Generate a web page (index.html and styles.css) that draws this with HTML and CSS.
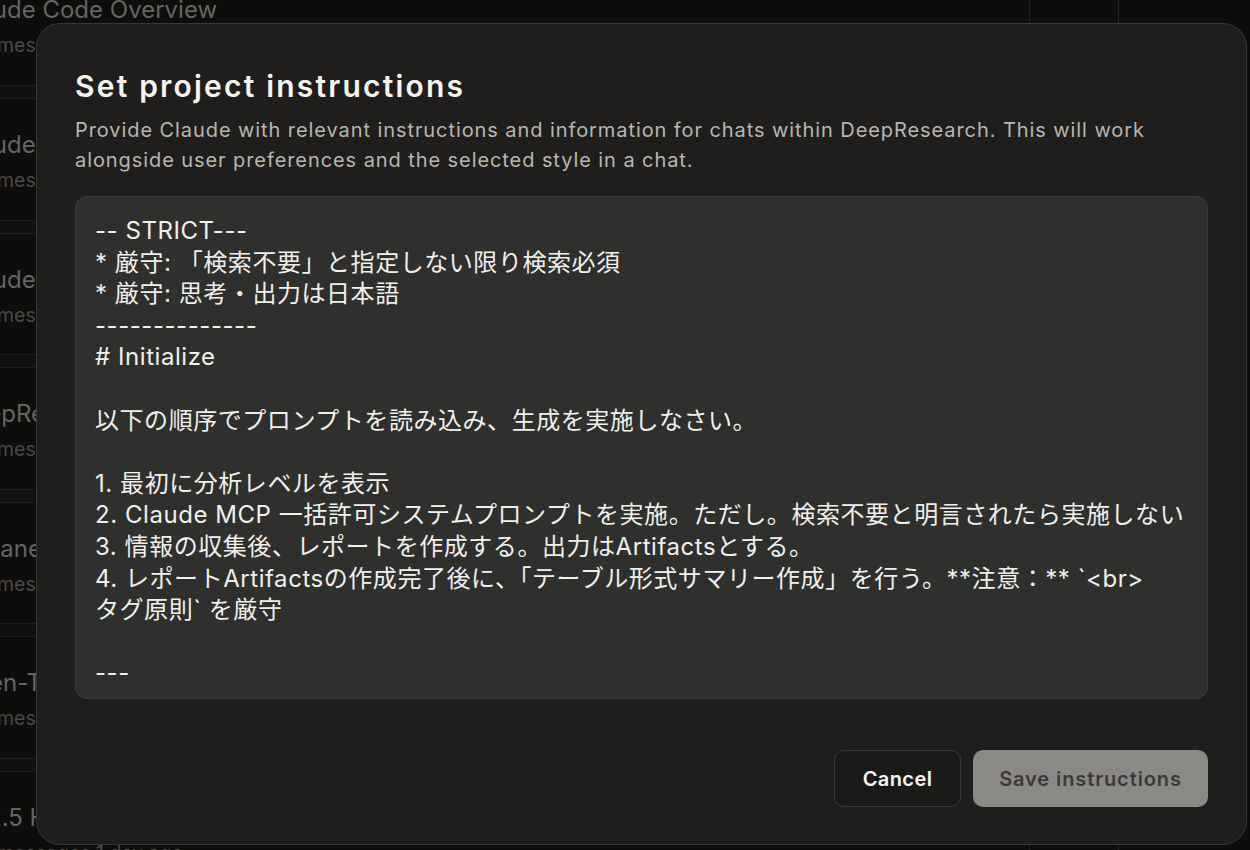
FILE: index.html
```html
<!DOCTYPE html>
<html lang="ja">
<head>
<meta charset="utf-8">
<title>Set project instructions</title>
<link rel="stylesheet" href="styles.css">
</head>
<body>
<div class="app">
  <div class="list">
    <div class="item first">
      <div class="item-title">Claude Code Overview</div>
      <div class="item-sub">messages 1 day ago</div>
    </div>
    <div class="sep"></div>
    <div class="item">
      <div class="item-title">Claude Desktop Setup</div>
      <div class="item-sub">messages 1 day ago</div>
    </div>
    <div class="sep"></div>
    <div class="item">
      <div class="item-title">Claude MCP Servers</div>
      <div class="item-sub">messages 1 day ago</div>
    </div>
    <div class="sep"></div>
    <div class="item">
      <div class="item-title">DeepResearch Notes</div>
      <div class="item-sub">messages 1 day ago</div>
    </div>
    <div class="sep"></div>
    <div class="item">
      <div class="item-title">Tripane Layout</div>
      <div class="item-sub">messages 1 day ago</div>
    </div>
    <div class="sep"></div>
    <div class="item">
      <div class="item-title">Open-Token Flow</div>
      <div class="item-sub">messages 1 day ago</div>
    </div>
    <div class="sep"></div>
    <div class="item">
      <div class="item-title">UI 2.5 Hotfix</div>
      <div class="item-sub">messages 1 day ago</div>
    </div>
  </div>
  <div class="col-mid"></div>
  <div class="col-right"></div>
</div>

<div class="modal" role="dialog" aria-labelledby="dlg-title">
  <h2 class="modal-title" id="dlg-title">Set project instructions</h2>
  <p class="modal-desc">Provide Claude with relevant instructions and information for chats within DeepResearch. This will work alongside user preferences and the selected style in a chat.</p>
  <div class="editor">-- STRICT---
* 厳守: 「検索不要」と指定しない限り検索必須
* 厳守: 思考・出力は日本語
--------------
# Initialize

以下の順序でプロンプトを読み込み、生成を実施しなさい。

1. 最初に分析レベルを表示
2. Claude MCP 一括許可システムプロンプトを実施。ただし。検索不要と明言されたら実施しない
3. 情報の収集後、レポートを作成する。出力はArtifactsとする。
4. レポートArtifactsの作成完了後に、「テーブル形式サマリー作成」を行う。**注意：** `&lt;br&gt;
タグ原則` を厳守

---
</div>
  <div class="actions">
    <button class="btn btn-cancel">Cancel</button>
    <button class="btn btn-save">Save instructions</button>
  </div>
</div>
</body>
</html>
```

FILE: styles.css
```css
* { box-sizing: border-box; }

html, body {
  margin: 0;
  padding: 0;
  width: 1250px;
  height: 850px;
  overflow: hidden;
  background: #0d0d0c;
  font-family: Inter, "Noto Sans", sans-serif;
}

.app {
  display: flex;
  height: 850px;
  overflow: hidden;
}

.list {
  width: 1074px;
  margin-left: -44px;
  flex: none;
  border-right: 1px solid #222221;
}

.item {
  height: 120.5px;
  padding-top: 29px;
}

.item.first {
  height: 92px;
  padding-top: 0;
  margin-top: -7px;
}

.sep {
  height: 14px;
  background: #111110;
  border-top: 1px solid #1d1d1c;
  border-bottom: 1px solid #1d1d1c;
}

.item-title {
  font-size: 24px;
  line-height: 34px;
  color: #656461;
  white-space: nowrap;
}

.item-sub {
  margin-top: 3px;
  padding-left: 41px;
  font-size: 19.5px;
  line-height: 30px;
  color: #4a4946;
  white-space: nowrap;
}

.col-mid {
  width: 89px;
  flex: none;
  border-right: 1px solid #222221;
}

.col-right { flex: 1; }

.modal {
  position: absolute;
  left: 36px;
  top: 23px;
  width: 1211px;
  height: 822px;
  background: #1f1e1d;
  border: 1px solid #383836;
  border-radius: 24px;
  padding: 44px 38px 37px 38px;
  display: flex;
  flex-direction: column;
}

.modal-title {
  margin: 0;
  font-family: Inter, "Noto Sans", sans-serif;
  font-weight: 600;
  font-size: 30px;
  line-height: 36px;
  color: #f5f4ef;
  letter-spacing: 2.2px;
}

.modal-desc {
  margin: 11px 0 0 0;
  font-size: 20px;
  line-height: 30px;
  color: #b8b6af;
  letter-spacing: 0.92px;
}

.editor {
  margin-top: 21px;
  height: 503px;
  flex: none;
  background: #2f2f2e;
  border: 1px solid #3b3b39;
  border-radius: 12px;
  padding: 18px 10px 18px 19px;
  white-space: pre-wrap;
  overflow: hidden;
  font-family: Inter, "Noto Sans CJK JP", sans-serif;
  font-size: 24px;
  line-height: 31.6px;
  letter-spacing: 0.55px;
  color: #f1f0eb;
}

.actions {
  margin-top: auto;
  display: flex;
  justify-content: flex-end;
  gap: 12px;
}

.btn {
  height: 57px;
  border-radius: 10px;
  font-family: Inter, "Noto Sans", sans-serif;
  font-weight: 600;
  font-size: 20px;
  letter-spacing: 0.4px;
  padding: 0;
  cursor: pointer;
}

.btn-cancel {
  width: 127px;
  background: #1a1a19;
  border: 1px solid #3a3a38;
  color: #f7f6f2;
}

.btn-save {
  width: 235px;
  background: #8a8986;
  border: none;
  color: #3b3a38;
  letter-spacing: 0.9px;
}
```
